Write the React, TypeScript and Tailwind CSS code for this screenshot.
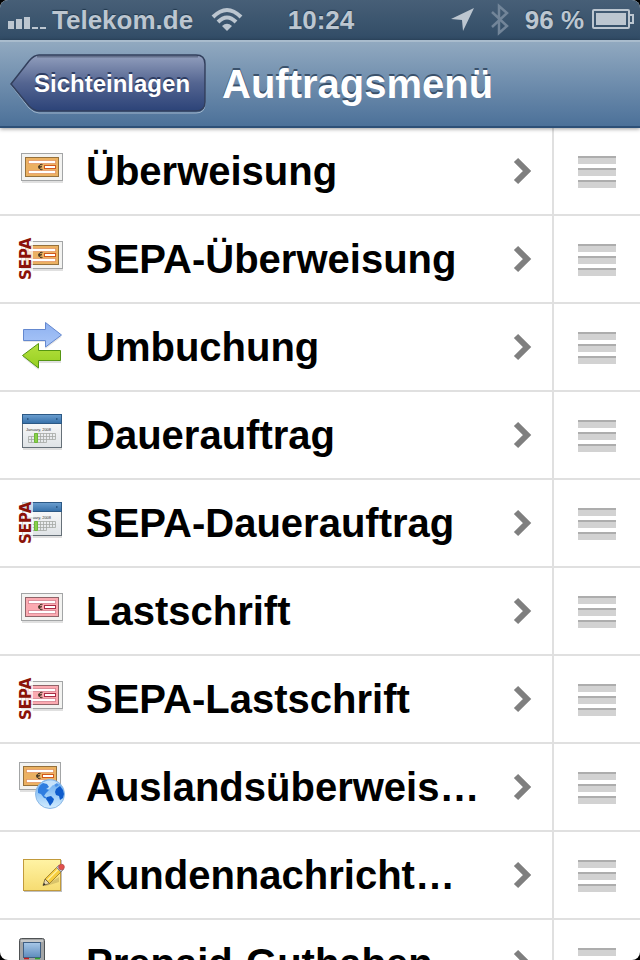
import type { ReactNode } from "react";

/* Zahlungsbeleg, orange oder rot */
function Slip({ fill, edge, box }: { fill: string; edge: string; box: string }) {
  return (
    <g>
      <rect x="4" y="14" width="41" height="28" fill="#000" opacity="0.12" />
      <rect x="3.5" y="12.5" width="41" height="27" fill="#f3f3f1" stroke="#a3a5a6" />
      <rect x="7.5" y="16.5" width="33" height="19" fill={fill} stroke={edge} />
      <rect x="10.5" y="19.5" width="27" height="3" fill="#fff" stroke={box} strokeOpacity="0.4" />
      <rect x="10.5" y="29.5" width="27" height="3" fill="#fff" stroke={box} strokeOpacity="0.4" />
      <rect x="26.5" y="24.5" width="11" height="3" fill="#fff" stroke={box} />
      <path d="M24.5 23.6c-2-.9-3.3.3-3.3 2.4s1.3 3.3 3.3 2.4M20 25.3h4M20 26.8h3.5" fill="none" stroke="#3f3322" />
    </g>
  );
}

function OrangeSlip() {
  return <Slip fill="#ebb162" edge="#95713c" box="#d2571b" />;
}

function RedSlip() {
  return <Slip fill="#fbaab1" edge="#8f6468" box="#a92d45" />;
}

function Calendar() {
  return (
    <g>
      <rect x="5" y="12" width="39" height="33" fill="#000" opacity="0.12" />
      <rect x="4.5" y="9.5" width="39" height="33" fill="url(#paper)" stroke="#667078" />
      <rect x="4.5" y="9.5" width="39" height="9" fill="url(#calTop)" stroke="#2c5985" />
      <path d="M9 14h1.5M38 14h1.5" stroke="#234d78" strokeWidth="1.5" />
      <text x="8" y="26" fontSize="4" fill="#333" fontFamily="Liberation Sans, sans-serif">
        January, 2008
      </text>
      <path
        d="M16.5 28.5h21v6M10.5 31.5h27M10.5 34.5h27M10.5 37.5h18M10.5 31.5v6M13.5 31.5v6M22.5 28.5v9M25.5 28.5v9M28.5 28.5v9M31.5 28.5v6M34.5 28.5v6"
        fill="none"
        stroke="#a4a8a5"
        strokeWidth="0.8"
      />
      <path d="M16.5 28.5h3v9h-3z" fill="#8ccf4c" stroke="#6cb83a" />
    </g>
  );
}

function Arrows() {
  return (
    <g>
      <path d="M5.5 14h22V7l16 13-16 12v-7h-22z" fill="#000" opacity="0.1" />
      <path d="M5.5 12.5h22v-7L43.5 18l-16 12v-6.5h-22z" fill="url(#blueArrow)" stroke="#6488cf" />
      <path d="M43 35H20.5v-7l-16 12 16 13v-7H43z" fill="#000" opacity="0.12" />
      <path d="M42.5 33.5h-22v-7l-16 12 16 12.5v-7.5h22z" fill="url(#greenArrow)" stroke="#559512" />
    </g>
  );
}

function Globe() {
  return (
    <g>
      <circle cx="32" cy="37" r="14.5" fill="url(#globe)" stroke="#8db9e6" />
      <path d="M23 27c5-5 14-5 18 0l-3 2-3-1-4 4-4-1-3 2-4 2c0-3 1-6 3-8z" fill="#dceffc" opacity="0.8" />
      <path d="M20 32c1-3 3-5 5-6l4 1 2 3-3 2 3 1-3 3-2 3 2 1 2 2-4-1-3-4-3-1z" fill="#2f7de0" />
      <path d="M29 40l4-1 3 3-1 3-3 4-2-4-2-3z" fill="#0f5ccc" />
      <path d="M38 32l4-3 3 4 1 4-1 4-3 2-1-4-3-1-1-3z" fill="#0f5ccc" />
      <path d="M36 28l3-2 2 2-3 2z" fill="#4b92e8" />
    </g>
  );
}

function Note() {
  return (
    <g>
      <rect x="6" y="15" width="38" height="32" fill="#000" opacity="0.25" />
      <rect x="5.5" y="14.5" width="37" height="31" fill="url(#note)" stroke="#c19a3b" />
      <path d="M26 41l15-9v5l-13 4z" fill="#8d7a3a" opacity="0.3" />
      <path d="M27 34l12-12 4.5 4.500-12 12z" fill="#f6cd3e" stroke="#94762a" strokeWidth="0.8" />
      <path d="M29.500 35l10.500-10.500" stroke="#fff0a0" strokeWidth="1.5" />
      <path d="M25 40.500l2-6.500 4.500 4.500z" fill="#ead9ad" stroke="#6b5a35" strokeWidth="0.8" />
      <path d="M25 40.500l1-2.600 1.600 1.500z" fill="#222" />
      <path d="M38.500 22.500l2.500-2.500 4.500 4.500-2.500 2.500z" fill="#c3c8cf" stroke="#777c85" strokeWidth="0.8" />
      <circle cx="43.5" cy="22" r="2.8" fill="#e2504c" stroke="#b8494a" strokeWidth="0.8" />
    </g>
  );
}

function Phone() {
  return (
    <g>
      <rect x="1.5" y="5.5" width="25" height="50" rx="2" fill="#a3a5a6" stroke="#4f5254" />
      <rect x="3" y="7" width="22" height="2" fill="#c6c8c9" />
      <rect x="5.5" y="9.5" width="17" height="15" fill="url(#screen)" stroke="#3f5f83" />
      <path d="M6 25.5h5" stroke="#c91d1d" strokeWidth="1.5" />
      <path d="M17 25.5h5" stroke="#31a42b" strokeWidth="1.5" />
    </g>
  );
}

function Sepa() {
  return (
    <g>
      <rect x="0" y="4" width="15" height="48" fill="#fff" opacity="0.7" />
      <text
        transform="translate(13 51) rotate(-90)"
        fontSize="15"
        fontWeight="700"
        fill="#8b1208"
        fontFamily="DejaVu Sans, sans-serif"
      >
        SEPA
      </text>
    </g>
  );
}

const items: { label: string; icon: ReactNode; sepa?: boolean }[] = [
  { label: "Überweisung", icon: <OrangeSlip /> },
  { label: "SEPA-Überweisung", icon: <OrangeSlip />, sepa: true },
  { label: "Umbuchung", icon: <Arrows /> },
  { label: "Dauerauftrag", icon: <Calendar /> },
  { label: "SEPA-Dauerauftrag", icon: <Calendar />, sepa: true },
  { label: "Lastschrift", icon: <RedSlip /> },
  { label: "SEPA-Lastschrift", icon: <RedSlip />, sepa: true },
  {
    label: "Auslandsüberweis…",
    icon: (
      <>
        <g transform="translate(-2 -7)"><OrangeSlip /></g>
        <Globe />
      </>
    ),
  },
  { label: "Kundennachricht…", icon: <Note /> },
  { label: "Prepaid-Guthaben", icon: <Phone /> },
];

/* Farbverläufe für alle Symbole */
function Gradients() {
  const list = [
    ["calTop", "#6c9fd0", "#356fa8"],
    ["paper", "#ffffff", "#dfe3e6"],
    ["blueArrow", "#8eb1f0", "#a9c6f8"],
    ["greenArrow", "#b4e03e", "#96cf20"],
    ["globe", "#5fa5ee", "#d3edff"],
    ["note", "#fff3a4", "#f6dc72"],
    ["screen", "#a8c8e8", "#5e8cbc"],
  ];
  return (
    <svg width="0" height="0" className="absolute" aria-hidden="true">
      <defs>
        {list.map(([id, from, to]) => (
          <linearGradient key={id} id={id} x1="0" y1="0" x2="0" y2="1">
            <stop offset="0" stopColor={from} />
            <stop offset="1" stopColor={to} />
          </linearGradient>
        ))}
      </defs>
    </svg>
  );
}

function StatusBar() {
  return (
    <div className="grid h-10 grid-cols-[1fr_auto_1fr] items-center bg-linear-to-b from-[#475f77] to-[#314c66] pr-1.5 pl-2 text-[26px] leading-10 font-bold text-[#bcc6d0] [text-shadow:0_-1px_1px_#22384d]">
      <div className="flex items-center gap-1.5">
        <svg width="38" height="40" viewBox="0 0 38 40" fill="#bcc6d0" aria-hidden="true">
          <path d="M0 21h6v8H0zM8 19h6v10H8zM16 17h6v12h-6zM24 27h6v2h-6zM32 27h6v2h-6z" />
        </svg>
        <span>Telekom.de</span>
        <svg width="32" height="40" viewBox="0 0 32 40" className="ml-3" fill="none" stroke="#bcc6d0" strokeWidth="4" aria-hidden="true">
          <path d="M2 17Q16 3 30 17M7 22Q16 13 25 22" />
          <path d="M16 31l-5-5q5-4.5 10 0z" fill="#bcc6d0" stroke="none" />
        </svg>
      </div>
      <span>10:24</span>
      <div className="flex items-center justify-end gap-2">
        <svg width="24" height="40" viewBox="0 0 24 40" aria-hidden="true">
          <path d="M23 8L12 31l-1-11L0 19z" fill="#bcc6d0" />
        </svg>
        <svg width="18" height="40" viewBox="0 0 18 40" className="mx-2" aria-hidden="true">
          <path d="M1 12l15 14-8 7V6l8 7L1 27" fill="none" stroke="#728599" strokeWidth="2.5" />
        </svg>
        <span>96 %</span>
        <svg width="42" height="40" viewBox="0 0 42 40" aria-hidden="true">
          <rect x="1" y="10" width="36" height="18" rx="1" fill="none" stroke="#bcc6d0" strokeWidth="2" />
          <path d="M4 13h30v12H4z" fill="#bcc6d0" />
          <path d="M38 15h3v8h-3" fill="none" stroke="#bcc6d0" strokeWidth="2" />
        </svg>
      </div>
    </div>
  );
}

function NavBar() {
  return (
    <header className="relative z-10 flex h-22 items-center gap-4 border-t-2 border-b-2 border-t-[#a9bccd] border-b-[#2d5077] bg-linear-to-b from-[#91a9c0] to-[#4c7199] pl-2.5 shadow-[0_1px_4px_#00000066]">
      <button type="button" className="relative h-[60px] w-[196px] pl-6 text-left">
        <svg viewBox="0 0 196 60" className="absolute inset-0 size-full" aria-hidden="true">
          <defs>
            <linearGradient id="back" x1="0" y1="0" x2="0" y2="1">
              <stop offset="0" stopColor="#929fbd" />
              <stop offset="0.5" stopColor="#546591" />
              <stop offset="1" stopColor="#2c4378" />
            </linearGradient>
          </defs>
          <path d="M1 31L19 8Q24 2 29 2H186Q195 2 195 11V50Q195 59 186 59H29Q24 59 19 54z" fill="none" stroke="#9fb4ca" />
          <path d="M1 30L19 7Q24 1 29 1H186Q195 1 195 10V48Q195 57 186 57H29Q24 57 19 52z" fill="url(#back)" stroke="#323f5c" strokeWidth="1.5" />
          <path d="M27 2.5H188" stroke="#3a455e" strokeWidth="2" opacity="0.5" />
        </svg>
        <span className="relative text-2xl leading-10 font-bold text-white [text-shadow:0_-2px_0_#2e3d63]">
          Sichteinlagen
        </span>
      </button>
      <h1 className="text-[40px] leading-12 font-bold text-white [text-shadow:0_-2px_0_#3a516b]">
        Auftragsmenü
      </h1>
    </header>
  );
}

function Grip() {
  return (
    <button type="button" aria-label="Verschieben" className="flex w-[88px] flex-col items-center justify-center gap-1 border-l-2 border-[#e0e0e0] pt-0.5">
      <span className="h-2 w-[38px] border-t-2 border-[#adadad] bg-[#d2d2d2]" />
      <span className="h-2 w-[38px] border-t-2 border-[#adadad] bg-[#d2d2d2]" />
      <span className="h-2 w-[38px] border-t-2 border-[#adadad] bg-[#d2d2d2]" />
    </button>
  );
}

export default function App() {
  return (
    <div className="bg-black">
      <div className="flex h-screen flex-col overflow-hidden rounded-lg bg-white font-['Liberation_Sans',Arial,sans-serif]">
        <Gradients />
        <StatusBar />
        <NavBar />
        <ul className="min-h-0 flex-1 overflow-hidden">
          {items.map(({ label, icon, sepa }) => (
            <li key={label} className="flex h-22 border-b-2 border-[#e0e0e0]">
              <button type="button" className="flex min-w-0 flex-1 items-center pr-5 pl-3 text-left">
                <svg width="56" height="60" viewBox="-6 0 56 60" className="shrink-0" aria-hidden="true">
                  {icon}
                  {sepa && <Sepa />}
                </svg>
                <span className="ml-[18px] flex-1 truncate text-[40px] leading-12 font-bold text-black">
                  {label}
                </span>
                <svg width="20" height="28" viewBox="0 0 20 28" className="shrink-0" aria-hidden="true">
                  <path d="M4 3l11 11L4 25" fill="none" stroke="#7f7f7f" strokeWidth="6" />
                </svg>
              </button>
              <Grip />
            </li>
          ))}
        </ul>
      </div>
    </div>
  );
}
